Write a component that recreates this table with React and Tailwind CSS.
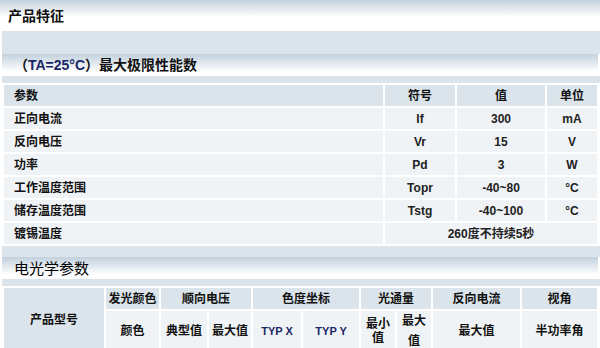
const font = { fontFamily: '"Liberation Sans", "Noto Sans CJK SC", sans-serif' }

const limits = [
  { name: '正向电流', sym: 'If', val: '300', unit: 'mA' },
  { name: '反向电压', sym: 'Vr', val: '15', unit: 'V' },
  { name: '功率', sym: 'Pd', val: '3', unit: 'W' },
  { name: '工作温度范围', sym: 'Topr', val: '-40~80', unit: '°C' },
  { name: '储存温度范围', sym: 'Tstg', val: '-40~100', unit: '°C' },
]

function SectionHeader({ children, bold = true }) {
  return (
    <div className="h-[22px] mr-[2px] pl-[12px] flex items-center bg-[linear-gradient(to_bottom,#c2d1dd,#ffffff_80%)]">
      <span className={`leading-none ${bold ? 'text-[14px] font-bold text-[#111]' : 'text-[15px] font-normal text-black'}`}>{children}</span>
    </div>
  )
}

export default function App() {
  return (
    <div className="w-[600px] h-[348px] overflow-hidden bg-white" style={font}>
      {/* page title */}
      <div className="h-[31px] pl-[8px] flex items-center bg-[linear-gradient(to_bottom,#c2d2de,#ffffff_55%)]">
        <span className="text-[14px] font-bold text-[#111] leading-none">产品特征</span>
      </div>

      <div className="ml-[2px]">
        <div className="h-[23px] bg-[#dae4ea]" />
        <SectionHeader>
          （<span className="text-[#1a2766]">TA=25°C</span>）最大极限性能数
        </SectionHeader>
        <div className="h-[7px] bg-[#dae4ea]" />

        <table className="w-[597px] table-fixed border-separate border-spacing-[2px] bg-white text-[12px] font-bold text-[#111]">
          <colgroup>
            <col className="w-[379px]" />
            <col className="w-[70px]" />
            <col className="w-[88px]" />
            <col className="w-[50px]" />
          </colgroup>
          <tbody>
            <tr className="h-[21px] bg-[#dae4ea]">
              <td className="pl-[10px] p-0">参数</td>
              <td className="text-center p-0">符号</td>
              <td className="text-center p-0">值</td>
              <td className="text-center p-0">单位</td>
            </tr>
            {limits.map((r) => (
              <tr key={r.name} className="h-[21px] bg-[#f0f3f5]">
                <td className="pl-[10px] p-0">{r.name}</td>
                <td className="text-center p-0 text-[#222]">{r.sym}</td>
                <td className="text-center p-0 text-[#222]">{r.val}</td>
                <td className="text-center p-0 text-[#222]">{r.unit}</td>
              </tr>
            ))}
            <tr className="h-[21px] bg-[#f0f3f5]">
              <td className="pl-[10px] p-0">镀锡温度</td>
              <td colSpan={3} className="text-center p-0 text-[#222]">260度不持续5秒</td>
            </tr>
          </tbody>
        </table>

        <div className="h-[11px] bg-[#dae4ea]" />
        <SectionHeader bold={false}>电光学参数</SectionHeader>
        <div className="h-[7px] bg-[#dae4ea]" />

        <table className="w-[597px] table-fixed border-separate border-spacing-[2px] bg-white text-[12px] font-bold text-[#111] text-center">
          <colgroup>
            <col className="w-[100px]" />
            <col className="w-[53px]" />
            <col className="w-[46px]" />
            <col className="w-[42px]" />
            <col className="w-[48px]" />
            <col className="w-[56px]" />
            <col className="w-[34px]" />
            <col className="w-[34px]" />
            <col className="w-[87px]" />
            <col className="w-[75px]" />
          </colgroup>
          <tbody>
            <tr className="h-[21px] bg-[#dae4ea]">
              <td rowSpan={2} className="p-0">产品型号</td>
              <td className="p-0">发光颜色</td>
              <td colSpan={2} className="p-0">顺向电压</td>
              <td colSpan={2} className="p-0">色度坐标</td>
              <td colSpan={2} className="p-0">光通量</td>
              <td className="p-0">反向电流</td>
              <td className="p-0">视角</td>
            </tr>
            <tr className="h-[40px] bg-[#f0f3f5]">
              <td className="p-0">颜色</td>
              <td className="p-0">典型值</td>
              <td className="p-0">最大值</td>
              <td className="p-0 text-[11px] text-[#1a2766]">TYP X</td>
              <td className="p-0 text-[11px] text-[#1a2766]">TYP Y</td>
              <td className="p-0 leading-[14px]">最小值</td>
              <td className="p-0 leading-[20px]">最大<br />值</td>
              <td className="p-0">最大值</td>
              <td className="p-0">半功率角</td>
            </tr>
          </tbody>
        </table>
      </div>
    </div>
  )
}
